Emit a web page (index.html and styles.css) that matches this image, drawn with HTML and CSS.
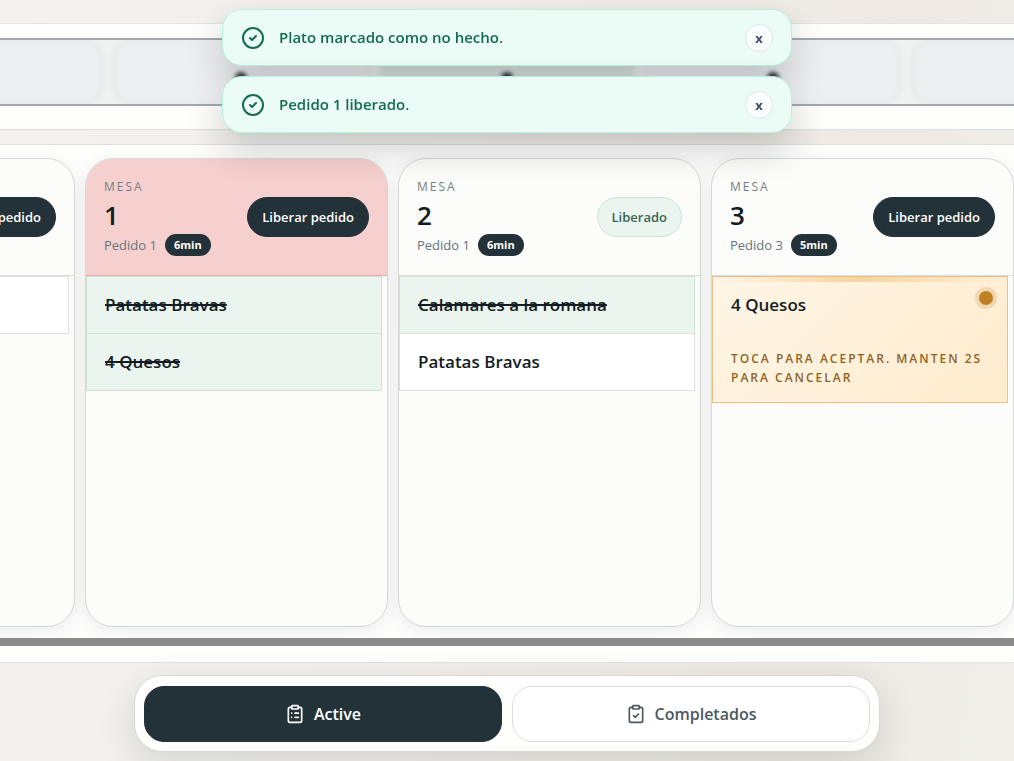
FILE: index.html
```html
<!DOCTYPE html>
<html lang="es">
<head>
    <meta charset="UTF-8">
    <meta name="viewport" content="width=device-width, initial-scale=1.0">
    <title>Cocina</title>
    <link rel="stylesheet" href="styles.css">
</head>
<body>
    <div class="toasts" role="status">
        <div class="toast">
            <svg class="toast-icon" viewBox="0 0 24 24"><circle cx="12" cy="12" r="10"/><path d="M9 12l2 2 4-4"/></svg>
            <p>Plato marcado como no hecho.</p>
            <button class="toast-close">x</button>
        </div>
        <div class="toast">
            <svg class="toast-icon" viewBox="0 0 24 24"><circle cx="12" cy="12" r="10"/><path d="M9 12l2 2 4-4"/></svg>
            <p>Pedido 1 liberado.</p>
            <button class="toast-close">x</button>
        </div>
    </div>

    <div class="app">
        <section class="strip">
            <div class="strip-track">
                <div class="tile"></div>
                <div class="tile"><span class="tile-dot"></span></div>
                <div class="tile current"><span class="tile-dot"></span></div>
                <div class="tile"><span class="tile-dot"></span></div>
                <div class="tile"></div>
            </div>
        </section>

        <main class="board">
            <div class="columns">
                <article class="column">
                    <header class="column-header">
                        <div></div>
                        <button class="release">Liberar pedido</button>
                    </header>
                    <ul class="items">
                        <li class="item"></li>
                    </ul>
                </article>
                <article class="column late">
                    <header class="column-header">
                        <div>
                            <p class="label">MESA</p>
                            <h2>1</h2>
                            <p class="order">Pedido 1 <span class="time">6min</span></p>
                        </div>
                        <button class="release">Liberar pedido</button>
                    </header>
                    <ul class="items">
                        <li class="item done">Patatas Bravas</li>
                        <li class="item done">4 Quesos</li>
                    </ul>
                </article>
                <article class="column">
                    <header class="column-header">
                        <div>
                            <p class="label">MESA</p>
                            <h2>2</h2>
                            <p class="order">Pedido 1 <span class="time">6min</span></p>
                        </div>
                        <button class="release released">Liberado</button>
                    </header>
                    <ul class="items">
                        <li class="item done">Calamares a la romana</li>
                        <li class="item">Patatas Bravas</li>
                    </ul>
                </article>
                <article class="column">
                    <header class="column-header">
                        <div>
                            <p class="label">MESA</p>
                            <h2>3</h2>
                            <p class="order">Pedido 3 <span class="time">5min</span></p>
                        </div>
                        <button class="release">Liberar pedido</button>
                    </header>
                    <ul class="items">
                        <li class="item pending">
                            4 Quesos
                            <span class="pending-dot"></span>
                            <p class="hint">TOCA PARA ACEPTAR. MANTEN 2S PARA CANCELAR</p>
                        </li>
                    </ul>
                </article>
            </div>
            <div class="scrollbar"></div>
        </main>

        <nav class="tabs">
            <button class="tab active">
                <svg viewBox="0 0 24 24"><rect x="8" y="2" width="8" height="4" rx="1"/><path d="M16 4h2a2 2 0 0 1 2 2v14a2 2 0 0 1-2 2H6a2 2 0 0 1-2-2V6a2 2 0 0 1 2-2h2M12 11h4M12 16h4M8 11h.01M8 16h.01"/></svg>
                Active
            </button>
            <button class="tab">
                <svg viewBox="0 0 24 24"><rect x="8" y="2" width="8" height="4" rx="1"/><path d="M16 4h2a2 2 0 0 1 2 2v14a2 2 0 0 1-2 2H6a2 2 0 0 1-2-2V6a2 2 0 0 1 2-2h2M9 14l2 2 4-4"/></svg>
                Completados
            </button>
        </nav>
    </div>
</body>
</html>
```

FILE: styles.css
```css
* {
    box-sizing: border-box;
}
body {
    margin: 0;
    overflow: hidden;
    font-family: "Open Sans", "Noto Sans", sans-serif;
    color: #131c22;
    background: linear-gradient(100deg, #f3f2ef 0%, #f2f0ec 40%, #eee9e2 80%, #f1efea 100%);
}
p, h2, ul {
    margin: 0;
    padding: 0;
}
button {
    font-family: inherit;
    cursor: pointer;
}
svg {
    fill: none;
    stroke: currentColor;
    stroke-width: 2;
    stroke-linecap: round;
    stroke-linejoin: round;
}
.app {
    display: flex;
    flex-direction: column;
    height: 100vh;
    padding: 23px 0 9px;
}

/* notifications */
.toasts {
    position: fixed;
    top: 9px;
    left: 0;
    right: 0;
    z-index: 10;
    display: flex;
    flex-direction: column;
    gap: 10px;
    width: 570px;
    max-width: 100%;
    margin: 0 auto;
}
.toast {
    display: flex;
    align-items: center;
    gap: 14px;
    height: 57px;
    padding: 0 18px;
    border: 1px solid #b5f2d8;
    border-radius: 20px;
    background: #eafcf5;
    color: #146c50;
    font-size: 15px;
    font-weight: 600;
    line-height: 20px;
    box-shadow: 0 16px 36px rgba(15, 23, 32, 0.2);
}
.toast p {
    flex: 1;
    padding-bottom: 2px;
}
.toast-icon {
    width: 24px;
    height: 24px;
}
.toast-close {
    width: 28px;
    height: 28px;
    padding: 0;
    border: 1px solid #e0e9e8;
    border-radius: 50%;
    background: #f9fdfd;
    color: #3f4c60;
    font-size: 13px;
    font-weight: 700;
}

/* upcoming orders */
.strip {
    padding: 14px 0 23px;
    border-top: 1px solid #e4e3df;
    border-bottom: 1px solid #dededa;
    background: #fdfdfb;
}
.strip-track {
    display: flex;
    justify-content: center;
    gap: 10px;
    height: 68px;
    overflow: hidden;
    border-top: 2px solid #a5a8ac;
    border-bottom: 2px solid #a5a8ac;
    background: #f0f1f1;
}
.tile {
    flex: 0 0 256px;
    border: 2px solid #e3e5e4;
    border-radius: 20px;
    background: #edeef1;
    text-align: center;
    filter: blur(2px);
}
.tile.current {
    background: #dbe5e1;
}
.tile-dot {
    display: inline-block;
    width: 12px;
    height: 12px;
    margin-top: 30px;
    border-radius: 50%;
    background: #2e353b;
}

/* board */
.board {
    flex: 1;
    display: flex;
    flex-direction: column;
    margin: 14px 0 12px;
    padding: 13px 0 16px;
    border-top: 1px solid #dededa;
    border-bottom: 1px solid #e2e1dd;
    background: #fefefd;
}
.columns {
    flex: 1;
    display: flex;
    justify-content: flex-end;
    gap: 10px;
}
.column {
    flex: 0 0 303px;
    overflow: hidden;
    border: 1px solid #d6d8d6;
    border-radius: 28px;
    background: #fcfcfa;
    box-shadow: 0 4px 18px rgba(35, 48, 70, 0.09);
}
.column-header {
    display: flex;
    align-items: center;
    justify-content: space-between;
    height: 117px;
    padding: 0 18px;
    border-bottom: 1px solid #dcdedc;
}
.late .column-header {
    border-color: #eea7a7;
    background: #f6d0cf;
}
.label {
    color: #718087;
    font-size: 12px;
    line-height: 18px;
    letter-spacing: 2px;
}
h2 {
    font-size: 26px;
    font-weight: 600;
    line-height: 38px;
}
.order {
    display: flex;
    align-items: center;
    gap: 8px;
    color: #67747b;
    font-size: 13px;
    line-height: 22px;
}
.time {
    padding: 0 9px;
    border-radius: 11px;
    background: #233138;
    color: #fff;
    font-size: 11px;
    font-weight: 700;
}
.release {
    height: 40px;
    padding: 0 14px;
    border: 1px solid #233138;
    border-radius: 20px;
    background: #233138;
    color: #fff;
    font-size: 13px;
    font-weight: 600;
}
.released {
    border-color: #d0e3d8;
    background: #ebf5ef;
    color: #396552;
}
.items {
    padding-right: 5px;
    list-style: none;
}
.item {
    position: relative;
    min-height: 58px;
    padding: 0 18px;
    border: 1px solid #dee0df;
    background: #fff;
    font-size: 17px;
    font-weight: 600;
    line-height: 56px;
}
.item + .item {
    margin-top: -1px;
}
.item.done {
    border-color: #d0dfd5;
    background: #ebf5ef;
    text-decoration: line-through;
    text-decoration-thickness: 2px;
}
.item.pending {
    padding-bottom: 15px;
    border-color: #ebc082;
    background:
        linear-gradient(90deg, transparent, #f7d3a0, transparent) top / 100% 5px no-repeat,
        linear-gradient(135deg, #fff6e7, #ffebcd);
}
.pending-dot {
    position: absolute;
    top: 14px;
    right: 14px;
    width: 14px;
    height: 14px;
    border-radius: 50%;
    background: #c17f24;
    box-shadow: 0 0 0 4px #f0d8b2;
}
.hint {
    margin-top: 16px;
    color: #906426;
    font-size: 12px;
    line-height: 19px;
    letter-spacing: 2px;
}
.scrollbar {
    height: 8px;
    margin-top: 11px;
    background: #8b8b8b;
}

/* bottom tabs */
.tabs {
    display: flex;
    gap: 10px;
    width: 746px;
    max-width: 100%;
    margin: 0 auto;
    padding: 10px 9px 9px;
    border: 1px solid #d7d8d5;
    border-radius: 28px;
    background: #fefefd;
    box-shadow: 0 12px 36px rgba(35, 48, 40, 0.15);
}
.tab {
    flex: 1;
    display: flex;
    align-items: center;
    justify-content: center;
    gap: 9px;
    height: 56px;
    border: 1px solid #dcdedc;
    border-radius: 20px;
    background: #fff;
    color: #4c5960;
    font-size: 16px;
    font-weight: 600;
}
.tab svg {
    width: 20px;
    height: 20px;
}
.tab.active {
    border-color: #233138;
    background: #233138;
    color: #fff;
}
```
